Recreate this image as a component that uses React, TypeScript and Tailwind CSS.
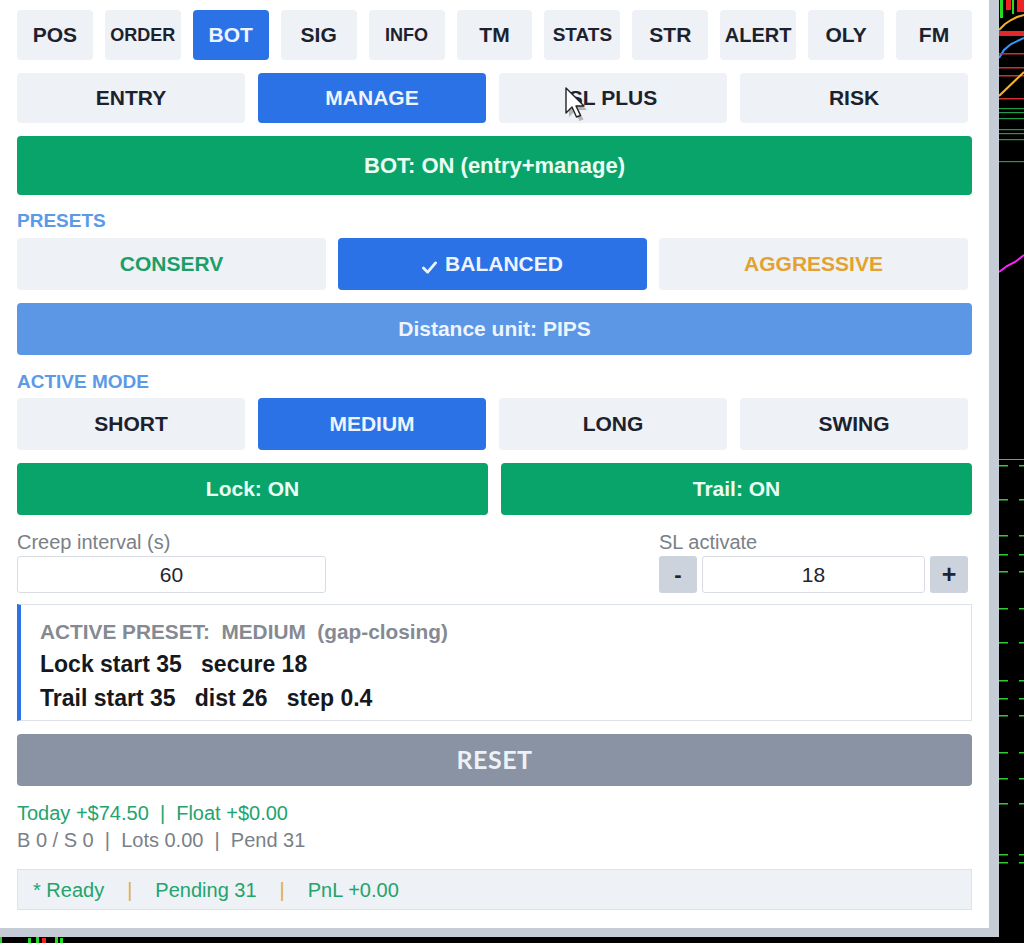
import React from 'react';

const font = { fontFamily: '"Liberation Sans", Arial, sans-serif' };

const tabs = [
  { label: 'POS', size: 'text-[21px]' },
  { label: 'ORDER', size: 'text-[18px]' },
  { label: 'BOT', size: 'text-[21px]', active: true },
  { label: 'SIG', size: 'text-[21px]' },
  { label: 'INFO', size: 'text-[18px]' },
  { label: 'TM', size: 'text-[21px]' },
  { label: 'STATS', size: 'text-[19px]' },
  { label: 'STR', size: 'text-[21px]' },
  { label: 'ALERT', size: 'text-[20px]' },
  { label: 'OLY', size: 'text-[21px]' },
  { label: 'FM', size: 'text-[21px]' },
];

const subTabs = ['ENTRY', 'MANAGE', 'SL PLUS', 'RISK'];
const modes = ['SHORT', 'MEDIUM', 'LONG', 'SWING'];

// green tick marks on the chart scale
const ticks = [465, 499, 535, 554, 571, 608, 642, 680, 698, 715, 752, 778, 803, 854, 862];
const greenLines = [108, 112, 118, 129, 133, 139, 161];
const redLines = [53, 67, 75, 98];

function Chart() {
  return (
    <svg width="25" height="937" viewBox="0 0 25 937" className="block">
      <rect width="25" height="937" fill="#000" />
      <rect x="1" y="0" width="3" height="18" fill="#22dd22" />
      <rect x="7" y="0" width="5" height="10" fill="#ee2222" />
      <rect x="13" y="0" width="2" height="14" fill="#22dd22" />
      <rect x="18" y="0" width="7" height="12" fill="#ee2222" />
      <polyline points="0,30 6,24 12,20 18,17 25,15" fill="none" stroke="#f5b324" strokeWidth="2" />
      <rect x="0" y="31" width="25" height="5" fill="#e02a2a" />
      <polyline points="0,58 5,50 12,44 25,38" fill="none" stroke="#3399ff" strokeWidth="2" />
      {redLines.map((y) => (
        <rect key={y} x="0" y={y} width="25" height="1.5" fill="#d03030" />
      ))}
      <line x1="0" y1="96" x2="25" y2="72" stroke="#f5b324" strokeWidth="2" />
      {greenLines.map((y) => (
        <rect key={y} x="0" y={y} width="25" height="1.2" fill="#1f9a4a" />
      ))}
      <polyline points="0,272 8,266 16,262 25,255" fill="none" stroke="#ff22ff" strokeWidth="2" />
      <rect x="0" y="459" width="25" height="1" fill="#33cc33" />
      {ticks.map((y) => (
        <g key={y} fill="#33cc33">
          <rect x="0" y={y} width="9" height="1.5" />
          <rect x="20" y={y} width="5" height="1.5" />
        </g>
      ))}
    </svg>
  );
}

function Cursor() {
  return (
    <svg width="26" height="36" viewBox="0 0 26 36" className="absolute left-[564px] top-[87px] pointer-events-none">
      <path d="M3 3 L3 28 L9 22 L13.5 32 L17.5 30.5 L13 21 L21 21 Z" fill="#000" opacity="0.25" transform="translate(2,2)" />
      <path d="M2 1 L2 26 L8 20 L12.5 30 L16.5 28.5 L12 19 L20 19 Z" fill="#fff" stroke="#222" strokeWidth="1.4" strokeLinejoin="round" />
    </svg>
  );
}

export default function App() {
  return (
    <div className="relative w-[1024px] h-[943px] bg-black overflow-hidden" style={font}>
      <div className="flex">
        {/* Panel */}
        <div className="w-[999px] h-[937px] border-r-[10px] border-b-[9px] border-[#c5ccd6] bg-white">
          <div className="px-[17px] pt-[10px] flex flex-col">
            {/* Main tabs */}
            <div className="flex gap-[12px]">
              {tabs.map((t) => (
                <div
                  key={t.label}
                  className={`w-[76px] h-[50px] rounded-[4px] flex items-center justify-center font-bold ${t.size} ${
                    t.active ? 'bg-[#2b72e6] text-[#eef4ff]' : 'bg-[#eef1f5] text-[#1c222d]'
                  }`}
                >
                  {t.label}
                </div>
              ))}
            </div>

            {/* Sub tabs */}
            <div className="mt-[13px] w-[951px] grid grid-cols-4 gap-[13px]">
              {subTabs.map((s) => (
                <div
                  key={s}
                  className={`h-[50px] rounded-[4px] flex items-center justify-center font-bold text-[21px] ${
                    s === 'MANAGE' ? 'bg-[#2b72e6] text-[#eef4ff]' : 'bg-[#eef1f5] text-[#1c222d]'
                  }`}
                >
                  {s}
                </div>
              ))}
            </div>

            <div className="mt-[13px] h-[59px] rounded-[4px] bg-[#09a469] text-[#eafff4] font-bold text-[22px] flex items-center justify-center">
              BOT: ON (entry+manage)
            </div>

            <div className="mt-[16px] h-[20px] leading-[20px] text-[19px] font-bold text-[#5b9be6]">PRESETS</div>

            <div className="mt-[7px] w-[951px] grid grid-cols-3 gap-[12px]">
              <div className="h-[52px] rounded-[4px] bg-[#eef1f5] text-[#1c9e68] font-bold text-[21px] flex items-center justify-center">
                CONSERV
              </div>
              <div className="h-[52px] rounded-[4px] bg-[#2b72e6] text-[#eef4ff] font-bold text-[21px] flex items-center justify-center gap-[8px]">
                <svg width="15" height="13" viewBox="0 0 16 14" className="mt-[7px]">
                  <path d="M1.5 7.5 L6 12 L14.5 2" fill="none" stroke="#eef4ff" strokeWidth="3" strokeLinecap="round" strokeLinejoin="round" />
                </svg>
                BALANCED
              </div>
              <div className="h-[52px] rounded-[4px] bg-[#eef1f5] text-[#e3a230] font-bold text-[21px] flex items-center justify-center">
                AGGRESSIVE
              </div>
            </div>

            <div className="mt-[13px] h-[52px] rounded-[4px] bg-[#5b97e4] text-[#eef4ff] font-bold text-[21px] flex items-center justify-center">
              Distance unit: PIPS
            </div>

            <div className="mt-[17px] h-[20px] leading-[20px] text-[19px] font-bold text-[#5b9be6]">ACTIVE MODE</div>

            <div className="mt-[6px] w-[951px] grid grid-cols-4 gap-[13px]">
              {modes.map((m) => (
                <div
                  key={m}
                  className={`h-[52px] rounded-[4px] flex items-center justify-center font-bold text-[21px] ${
                    m === 'MEDIUM' ? 'bg-[#2b72e6] text-[#eef4ff]' : 'bg-[#eef1f5] text-[#1c222d]'
                  }`}
                >
                  {m}
                </div>
              ))}
            </div>

            <div className="mt-[13px] grid grid-cols-2 gap-[13px]">
              <div className="h-[52px] rounded-[4px] bg-[#09a469] text-[#eafff4] font-bold text-[21px] flex items-center justify-center">
                Lock: ON
              </div>
              <div className="h-[52px] rounded-[4px] bg-[#09a469] text-[#eafff4] font-bold text-[21px] flex items-center justify-center">
                Trail: ON
              </div>
            </div>

            {/* Inputs */}
            <div className="mt-[16px] w-[951px] flex justify-between">
              <div className="w-[309px] flex flex-col">
                <div className="h-[22px] leading-[22px] text-[20px] text-[#7a7f88]">Creep interval (s)</div>
                <div className="mt-[3px] h-[37px] rounded-[3px] border border-[#d9dde3] bg-white flex items-center justify-center text-[21px] text-[#1f2530]">
                  60
                </div>
              </div>
              <div className="w-[309px] flex flex-col">
                <div className="h-[22px] leading-[22px] text-[20px] text-[#7a7f88]">SL activate</div>
                <div className="mt-[3px] flex gap-[5px]">
                  <div className="w-[38px] h-[37px] rounded-[3px] bg-[#cdd3dc] flex items-center justify-center font-bold text-[22px] text-[#1f2530]">
                    -
                  </div>
                  <div className="flex-1 h-[37px] rounded-[3px] border border-[#d9dde3] bg-white flex items-center justify-center text-[21px] text-[#1f2530]">
                    18
                  </div>
                  <div className="w-[38px] h-[37px] rounded-[3px] bg-[#cdd3dc] flex items-center justify-center font-bold text-[25px] text-[#1f2530]">
                    +
                  </div>
                </div>
              </div>
            </div>

            {/* Active preset box */}
            <div className="mt-[11px] h-[117px] border border-[#dde2e8] border-l-[4px] border-l-[#2b72e6] pl-[19px] pt-[14px] flex flex-col">
              <div className="h-[26px] leading-[26px] text-[20.8px] font-bold text-[#858a92] whitespace-pre">
                {'ACTIVE PRESET:  MEDIUM  (gap-closing)'}
              </div>
              <div className="mt-[5px] h-[28px] leading-[28px] text-[23px] font-bold text-[#15181d] whitespace-pre">
                {'Lock start 35   secure 18'}
              </div>
              <div className="mt-[6px] h-[28px] leading-[28px] text-[23px] font-bold text-[#15181d] whitespace-pre">
                {'Trail start 35   dist 26   step 0.4'}
              </div>
            </div>

            <div className="mt-[13px] h-[52px] rounded-[4px] bg-[#8a93a3] text-[#eef1f5] text-[25px] tracking-[0.5px] flex items-center justify-center" style={{ fontFamily: 'Lato, "Liberation Sans", sans-serif', fontWeight: 700 }}>
              RESET
            </div>

            <div className="mt-[15px] h-[24px] leading-[24px] text-[20px] text-[#22a46c] whitespace-pre">
              {'Today +$74.50  |  Float +$0.00'}
            </div>
            <div className="mt-[3px] h-[24px] leading-[24px] text-[20px] text-[#7a7f88] whitespace-pre">
              {'B 0 / S 0  |  Lots 0.00  |  Pend 31'}
            </div>

            <div className="mt-[17px] h-[41px] border border-[#dde3ea] bg-[#eef1f5] pl-[15px] flex items-center text-[20px] text-[#22a46c] whitespace-pre">
              <span>* Ready</span>
              <span className="mx-[23px] text-[#e0b03a]">|</span>
              <span>Pending 31</span>
              <span className="mx-[23px] text-[#e0b03a]">|</span>
              <span>PnL +0.00</span>
            </div>
          </div>
        </div>
        <Chart />
      </div>

      {/* chart strip below the panel */}
      <svg width="1024" height="6" viewBox="0 0 1024 6" className="block">
        <rect width="1024" height="6" fill="#000" />
        <rect x="0" y="0" width="2" height="6" fill="#33cc33" />
        <rect x="28" y="1" width="3" height="5" fill="#22dd22" />
        <rect x="36" y="0" width="3" height="6" fill="#22dd22" />
        <rect x="42" y="1" width="4" height="5" fill="#ee2222" />
        <rect x="55" y="0" width="3" height="6" fill="#22dd22" />
        <rect x="60" y="1" width="3" height="5" fill="#22dd22" />
      </svg>

      <Cursor />
    </div>
  );
}
